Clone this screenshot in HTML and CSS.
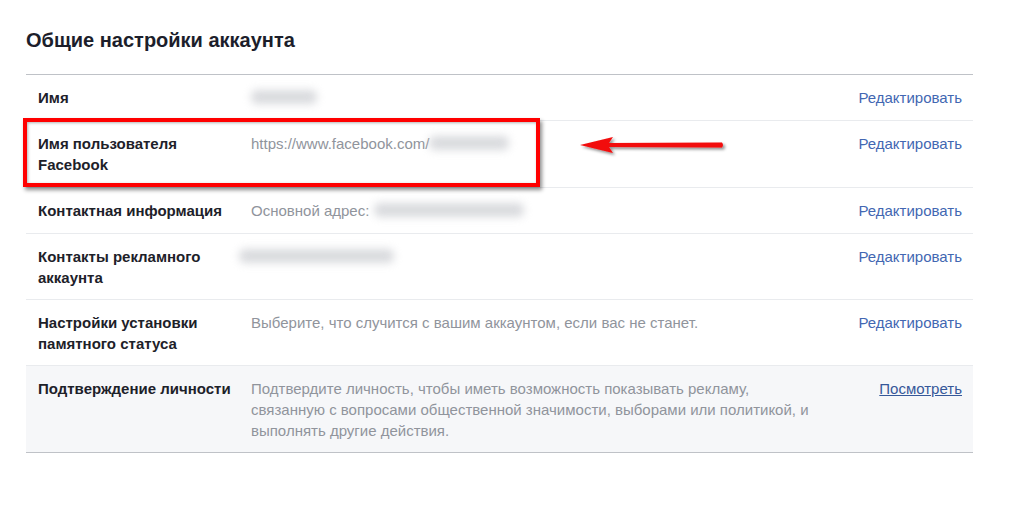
FILE: index.html
```html
<!DOCTYPE html>
<html lang="ru">
<head>
<meta charset="utf-8">
<title>Общие настройки аккаунта</title>
<link rel="stylesheet" href="styles.css">
</head>
<body>
<div class="page">
  <h1 class="title">Общие настройки аккаунта</h1>
  <div class="table">
    <div class="row">
      <div class="label">Имя</div>
      <div class="value"><span class="blur w66"></span></div>
      <a class="edit">Редактировать</a>
    </div>
    <div class="row two">
      <div class="label">Имя пользователя Facebook</div>
      <div class="value">https://www.facebook.com/<span class="blur w80"></span></div>
      <a class="edit">Редактировать</a>
    </div>
    <div class="row">
      <div class="label">Контактная информация</div>
      <div class="value">Основной адрес: <span class="blur w150"></span></div>
      <a class="edit">Редактировать</a>
    </div>
    <div class="row two tight">
      <div class="label">Контакты рекламного аккаунта</div>
      <div class="value shift"><span class="blur w155"></span></div>
      <a class="edit">Редактировать</a>
    </div>
    <div class="row two tight">
      <div class="label">Настройки установки памятного статуса</div>
      <div class="value">Выберите, что случится с вашим аккаунтом, если вас не станет.</div>
      <a class="edit">Редактировать</a>
    </div>
    <div class="row three tight grey">
      <div class="label">Подтверждение личности</div>
      <div class="value narrow">Подтвердите личность, чтобы иметь возможность показывать рекламу, связанную с вопросами общественной значимости, выборами или политикой, и выполнять другие действия.</div>
      <a class="edit view">Посмотреть</a>
    </div>
  </div>
  <div class="highlight"></div>
  <svg class="arrow" width="160" height="30" viewBox="0 0 160 30">
    <defs>
      <filter id="sh" x="-10%" y="-50%" width="120%" height="200%">
        <feDropShadow dx="2" dy="2" stdDeviation="1.5" flood-color="#000" flood-opacity="0.45"/>
      </filter>
    </defs>
    <path d="M4 15 L37 7 L33 13 L146 12.5 Q148 15 146 17.5 L33 17 L37 23 Z" fill="#f20d0d" filter="url(#sh)"/>
  </svg>
</div>
</body>
</html>
```
FILE: styles.css
```css
html, body {
  margin: 0;
  padding: 0;
  background: #ffffff;
}
body {
  font-family: "Liberation Sans", Arial, sans-serif;
  color: #1d2129;
}
.page {
  position: relative;
  width: 947px;
  margin-left: 26px;
  padding-top: 28px;
}
.title {
  margin: 0 0 22px 0;
  font-size: 20px;
  line-height: 24px;
  font-weight: bold;
  color: #1c1e2b;
}
.table {
  border-top: 1px solid #bfc2c7;
  border-bottom: 1px solid #bfc2c7;
}
.row {
  display: flex;
  align-items: flex-start;
  padding: 12px 11px 12px 12px;
  border-top: 1px solid #e9ebee;
  font-size: 15px;
  line-height: 21px;
  height: 21px;
}
.row.two {
  height: 42px;
}
.row.three {
  height: 63px;
}
.row.tight {
  padding-bottom: 11px;
}
.row:first-child {
  border-top: none;
}
.row.grey {
  background: #f6f7f9;
}
.label {
  flex: 0 0 196px;
  margin-right: 17px;
  font-weight: bold;
  color: #1d2129;
}
.value {
  flex: 1 1 auto;
  color: #90949c;
}
.value.narrow {
  flex: 0 0 568px;
}
.value.shift {
  margin-left: -12px;
}
.edit {
  margin-left: auto;
  flex: 0 0 auto;
  color: #4267b2;
  cursor: pointer;
}
.edit.view {
  color: #365899;
  text-decoration: underline;
}
.blur {
  display: inline-block;
  height: 14px;
  vertical-align: top;
  margin-top: 3px;
  background: #c9cbd0;
  border-radius: 6px;
  filter: blur(4px);
  opacity: 0.7;
}
.w66 { width: 66px; }
.w80 { width: 80px; }
.w150 { width: 150px; }
.w155 { width: 155px; }
.highlight {
  position: absolute;
  left: -3px;
  top: 118px;
  width: 509px;
  height: 61px;
  border: 4px solid #ff0000;
  box-shadow: 2px 3px 4px rgba(0,0,0,0.45), inset 1px 1px 3px rgba(0,0,0,0.3);
  pointer-events: none;
}
.arrow {
  position: absolute;
  left: 550px;
  top: 130px;
}
```
